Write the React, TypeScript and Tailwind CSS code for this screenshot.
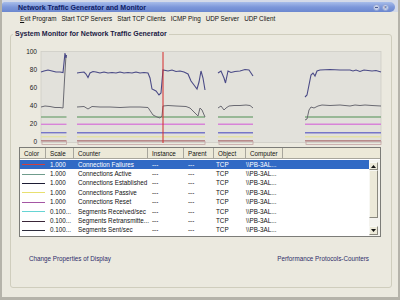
import React from "react";

type Pt = [number, number];

// chart segments, x ranges where data was collected (page coordinates)
const SEGMENTS: [number, number][] = [
  [41, 66.5],
  [77, 205],
  [218, 253],
  [305, 381],
];

const NAVY: Pt[][] = [
  [[41, 72], [44, 71], [48, 70], [52, 71], [56, 72], [60, 72], [63, 72.5], [65, 53], [66, 58], [66.5, 55]],
  [[77, 73], [80, 72.5], [84, 72], [86, 74], [88, 77.5], [90, 73], [93, 71.5], [96, 72], [100, 73], [104, 72], [108, 73], [112, 72.5], [116, 73], [120, 72], [124, 73], [128, 72.5], [132, 73], [136, 72], [140, 73], [144, 72.5], [148, 73], [150, 78], [152, 89], [156, 91], [159, 95], [161, 93], [163, 70], [168, 71], [172, 70], [176, 71.5], [180, 71], [184, 72], [188, 74], [191, 81], [194, 85], [197, 89], [199, 82], [201, 71], [203, 78], [205, 90]],
  [[218, 73], [221, 71], [224, 78], [225.5, 83], [228, 71], [231, 72.5], [235, 71.5], [240, 71], [245, 69.5], [249, 70], [251, 73], [253, 76]],
  [[305, 97], [307, 95], [309, 85], [311, 75], [313, 73], [315, 76], [317, 71], [320, 70], [330, 69.5], [340, 70], [350, 70], [353, 71], [356, 70], [360, 71.5], [364, 70], [368, 70.5], [372, 71], [376, 70.5], [381, 72]],
];

const GRAY: Pt[][] = [
  [[41, 107], [45, 106], [50, 106.5], [55, 107.5], [60, 107.5], [63, 108], [64.5, 80], [66, 55]],
  [[77, 107], [84, 106.5], [88, 109], [92, 106.5], [100, 107], [110, 107], [120, 107.5], [130, 107], [140, 107], [148, 107.5], [151, 112], [153, 115], [157, 117], [160, 118], [162, 116], [163, 106], [168, 105.5], [176, 106], [186, 106.5], [190, 108], [194, 112], [198, 116], [200, 108], [202, 110], [205, 117]],
  [[218, 108], [221, 106], [224, 110], [226, 108], [229, 106], [234, 105.5], [240, 105.5], [246, 105], [250, 105.5], [253, 108]],
  [[305, 120], [307, 119], [309, 110], [311, 107], [314, 108], [318, 106], [322, 105], [330, 105.5], [340, 105], [350, 106], [355, 105], [360, 105.5], [365, 105], [372, 105.5], [381, 106]],
];

const FLAT = [
  { y: 117, color: "#7faa7f" },
  { y: 124.3, color: "#d884d8" },
  { y: 132.7, color: "#7676c8" },
  { y: 136.7, color: "#e4e2a8" },
  { y: 140.7, color: "#b88a8a" },
];

const ROWS = [
  { color: "#d04040", scale: "1.000", counter: "Connection Failures" },
  { color: "#6f9c8c", scale: "1.000", counter: "Connections Active" },
  { color: "#1c1c34", scale: "1.000", counter: "Connections Established" },
  { color: "#e8e070", scale: "1.000", counter: "Connections Passive" },
  { color: "#a456a4", scale: "1.000", counter: "Connections Reset" },
  { color: "#66d4d4", scale: "0.100...", counter: "Segments Received/sec" },
  { color: "#3a2638", scale: "0.100...", counter: "Segments Retransmitte..." },
  { color: "#2c2c3c", scale: "0.100...", counter: "Segments Sent/sec" },
];

const COLS = [
  { label: "Color", w: "w-[26px]" },
  { label: "Scale", w: "w-[28px]" },
  { label: "Counter", w: "w-[74px]" },
  { label: "Instance", w: "w-[36px]" },
  { label: "Parent", w: "w-[30px]" },
  { label: "Object", w: "w-[32px]" },
  { label: "Computer", w: "w-[37px]" },
];

const MENU = ["Start TCP Servers", "Start TCP Clients", "ICMP Ping", "UDP Server", "UDP Client"];

const toPoints = (pts: Pt[]) => pts.map(([x, y]) => `${x},${y}`).join(" ");

function Chart() {
  const labels = [100, 80, 60, 40, 20, 0];
  return (
    <svg width={372} height={100} viewBox="11 47 372 100" className="block">
      <rect x={41} y={51.5} width={340} height={91} fill="#e2e1db" stroke="#cfcec6" strokeWidth={0.8} />
      {labels.map((v) => (
        <text
          key={v}
          x={37}
          y={142 - v * 0.9 + 2.3}
          textAnchor="end"
          fontSize={6.5}
          fill="#222"
          fontFamily="'Liberation Sans', Arial, sans-serif"
        >
          {v}
        </text>
      ))}
      {SEGMENTS.map(([a, b], i) => (
        <g key={i}>
          {FLAT.map((f) => (
            <line key={f.y} x1={a} x2={b} y1={f.y} y2={f.y} stroke={f.color} strokeWidth={1.4} />
          ))}
          <rect x={a + 1} y={141.5} width={b - a - 1} height={3} fill="none" stroke="#c4a4a4" strokeWidth={0.8} />
          <polyline points={toPoints(GRAY[i])} fill="none" stroke="#6a6a72" strokeWidth={1} />
          <polyline points={toPoints(NAVY[i])} fill="none" stroke="#4a4a86" strokeWidth={1.1} />
        </g>
      ))}
      <line x1={163} x2={163} y1={52} y2={143} stroke="#d42a2a" strokeWidth={1} />
    </svg>
  );
}

function ListView() {
  return (
    <div className="ml-[8px] w-[362px] h-[90px] border border-[#7c7c78] bg-white flex flex-col overflow-hidden">
      <div className="flex h-[11px] bg-[#ece9d8] border-b border-[#a8a69c] shrink-0">
        {COLS.map((c) => (
          <div
            key={c.label}
            className={`${c.w} h-full border-r border-[#a8a69c] pl-[4px] leading-[11px] text-[6.3px] text-[#111]`}
          >
            {c.label}
          </div>
        ))}
        <div className="flex-1 h-full" />
      </div>
      <div className="flex flex-1 pt-[1px]">
        <div className="w-[350px] flex flex-col">
          {ROWS.map((r, i) => {
            const sel = i === 0;
            return (
              <div
                key={r.counter}
                className={`flex h-[9.4px] items-center text-[6.3px] leading-none ${
                  sel ? "bg-[#316ac5] text-white" : "text-[#111]"
                }`}
              >
                <div className="w-[26px] flex items-center pl-[2px]">
                  <div className="w-[23px] h-[1px]" style={{ backgroundColor: r.color }} />
                </div>
                <div className="w-[28px] pl-[4px]">{r.scale}</div>
                <div className="w-[74px] pl-[4px] whitespace-nowrap">{r.counter}</div>
                <div className="w-[36px] pl-[4px]">---</div>
                <div className="w-[30px] pl-[4px]">---</div>
                <div className="w-[32px] pl-[2px]">TCP</div>
                <div className="w-[60px] pl-[0px] whitespace-nowrap">\\PB-3AL...</div>
              </div>
            );
          })}
        </div>
        <div className="w-[11px] flex flex-col bg-[#f4f3ee] pt-[2px]">
          <div className="h-[8px] w-[9px] bg-[#ece9d8] border border-[#f8f8f4] border-r-[#8a887e] border-b-[#8a887e] flex items-center justify-center">
            <svg width="5" height="3" viewBox="0 0 5 3"><path d="M0 3 L2.5 0 L5 3 Z" fill="#111" /></svg>
          </div>
          <div className="h-[48px] w-[9px] bg-[#ece9d8] border border-[#f8f8f4] border-r-[#8a887e] border-b-[#8a887e]" />
          <div className="flex-1" />
          <div className="h-[9px] w-[9px] bg-[#ece9d8] border border-[#f8f8f4] border-r-[#8a887e] border-b-[#8a887e] flex items-center justify-center mb-[1px]">
            <svg width="5" height="3" viewBox="0 0 5 3"><path d="M0 0 L2.5 3 L5 0 Z" fill="#111" /></svg>
          </div>
        </div>
      </div>
    </div>
  );
}

export default function App() {
  return (
    <div className="w-[400px] h-[300px] bg-[#ebe9df] font-['Liberation_Sans',Arial,sans-serif] overflow-hidden flex flex-col border-l-[2px] border-r-[2px] border-b-[3px] border-[#b5b3aa]">
      {/* title bar */}
      <div className="h-[12px] bg-[#d4dae8] pt-[2px] shrink-0">
        <div className="h-[10px] w-[393px] rounded-r-[6px] rounded-tl-[3px] bg-gradient-to-b from-[#a8bdea] via-[#7d98da] to-[#6b87cf] flex items-center pl-[16px]">
          <span className="text-[7px] font-bold text-[#0e1c66] leading-none">
            Network Traffic Generator and Monitor
          </span>
          <div className="ml-auto mr-[6px] flex gap-[2px]">
            <div className="w-[7px] h-[7px] rounded-full bg-[#c5cfe8] border border-[#8fa2d4] flex items-center justify-center">
              <div className="w-[3px] h-[1px] bg-[#4a5a90]" />
            </div>
            <div className="w-[7px] h-[7px] rounded-full bg-[#c5cfe8] border border-[#8fa2d4] flex items-center justify-center text-[5px] leading-none text-[#4a5a90]">
              ×
            </div>
          </div>
        </div>
      </div>
      {/* menu */}
      <div className="h-[14px] flex items-center pl-[18px] gap-[5px] text-[6.3px] text-[#111] shrink-0">
        <span>
          <span className="underline">E</span>xit Program
        </span>
        {MENU.map((m) => (
          <span key={m} className="whitespace-nowrap">{m}</span>
        ))}
      </div>
      {/* group box */}
      <fieldset className="mt-[4px] ml-[8px] w-[382px] h-[258px] border border-[#cfcdbd] rounded-[3px] shrink-0">
        <legend className="ml-[2px] px-[2px] text-[7px] leading-[8px] font-bold text-[#1a1a44]">
          System Monitor for Network Traffic Generator
        </legend>
        <div className="mt-[9px]">
          <Chart />
        </div>
        <ListView />
        <div className="mt-[17px] flex justify-between pl-[18px] pr-[22px] text-[6.3px] text-[#2e2e6a]">
          <span>Change Properties of Display</span>
          <span>Performance Protocols-Counters</span>
        </div>
      </fieldset>
    </div>
  );
}
